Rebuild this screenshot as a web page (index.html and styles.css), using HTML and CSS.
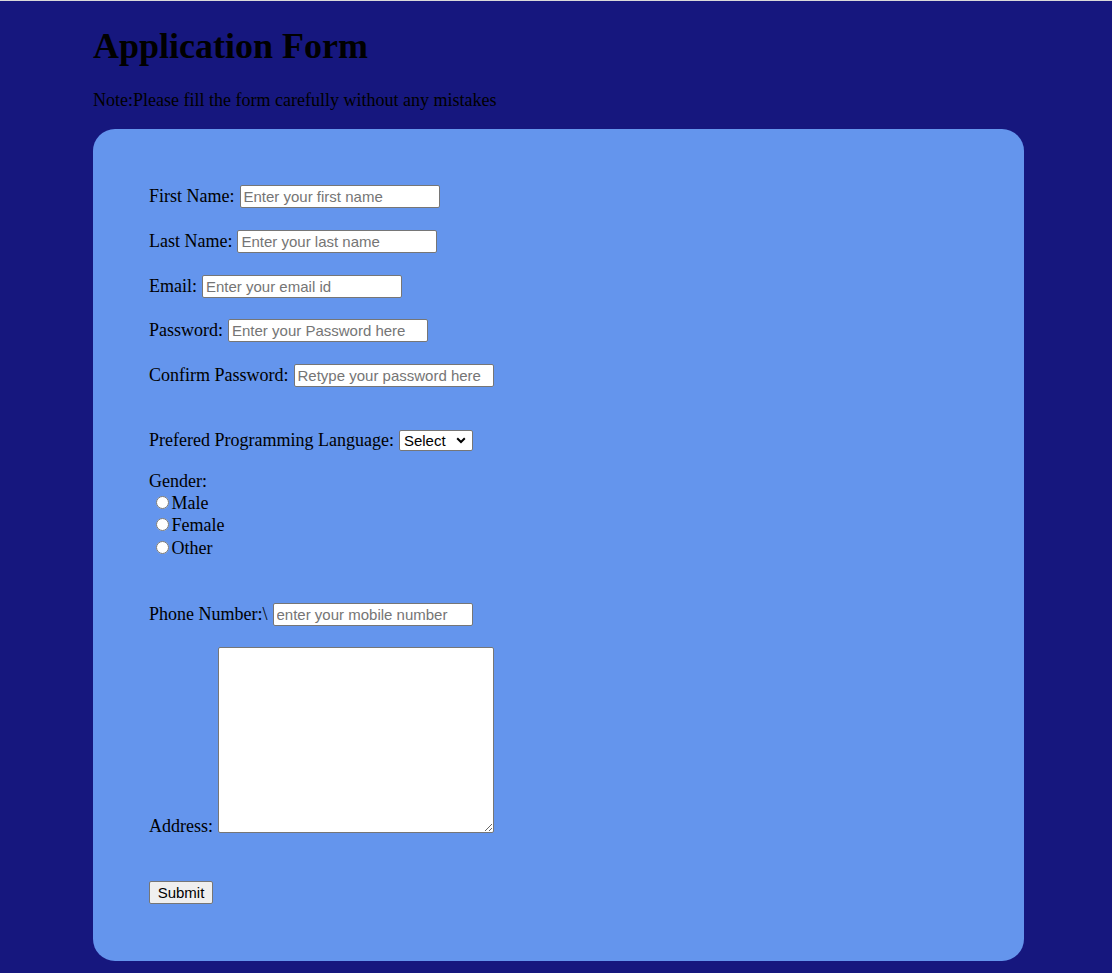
FILE: index.html
```html
<!DOCTYPE html>
<html lang="en">
<head>
<meta charset="utf-8">
<title>Application Form</title>
<link rel="stylesheet" href="styles.css">
</head>
<body>
<div class="wrap">
  <h1 class="title">Application Form</h1>
  <p class="note">Note:Please fill the form carefully without any mistakes</p>
  <form class="panel" onsubmit="return false">
    <div class="row"><label for="fn">First Name:</label><input id="fn" class="field" type="text" placeholder="Enter your first name"></div>
    <div class="row"><label for="ln">Last Name:</label><input id="ln" class="field" type="text" placeholder="Enter your last name"></div>
    <div class="row"><label for="em">Email:</label><input id="em" class="field" type="email" placeholder="Enter your email id"></div>
    <div class="row"><label for="pw">Password:</label><input id="pw" class="field" type="password" placeholder="Enter your Password here"></div>
    <div class="row"><label for="cpw">Confirm Password:</label><input id="cpw" class="field" type="password" placeholder="Retype your password here"></div>

    <div class="row row-select"><label for="lang">Prefered Programming Language:</label>
      <span class="select-wrap">
        <select id="lang" class="select">
          <option>Select</option>
          <option>C</option>
          <option>C++</option>
          <option>Java</option>
          <option>Python</option>
        </select>
        <svg class="chev" width="10" height="7" viewBox="0 0 10 7" aria-hidden="true"><path d="M1.2 1.3 L5 5 L8.8 1.3" fill="none" stroke="#000" stroke-width="2"/></svg>
      </span>
    </div>

    <div class="gender">
      <div class="gline">Gender:</div>
      <label class="gline opt"><input class="radio" type="radio" name="gender">Male</label>
      <label class="gline opt"><input class="radio" type="radio" name="gender">Female</label>
      <label class="gline opt"><input class="radio" type="radio" name="gender">Other</label>
    </div>

    <div class="row row-phone"><label for="ph">Phone Number:\</label><input id="ph" class="field" type="tel" placeholder="enter your mobile number"></div>

    <div class="row row-address"><label class="addr-label" for="ad">Address:</label><textarea id="ad" class="area"></textarea></div>

    <div class="row-submit"><button class="btn" type="submit">Submit</button></div>
  </form>
</div>
</body>
</html>
```

FILE: styles.css
```css
html, body {
  margin: 0;
  padding: 0;
}

body {
  background: #16177e;
  border-top: 1px solid #d9d9d9;
  font-family: "Liberation Serif", "Times New Roman", serif;
  font-size: 18px;
  color: #000;
  min-height: 972px;
  box-sizing: border-box;
}

.wrap {
  width: 931px;
  margin-left: 93px;
  display: flow-root;
}

.title {
  font-size: 36px;
  font-weight: bold;
  margin: 24px 0 0;
  line-height: normal;
}

.note {
  margin: 23px 0 18px;
  line-height: normal;
}

.panel {
  box-sizing: border-box;
  background: #6495ed;
  border-radius: 22px;
  padding: 56px;
  height: 832px;
  display: flex;
  flex-direction: column;
  align-items: flex-start;
}

.row {
  display: flex;
  align-items: baseline;
  gap: 5px;
  margin-bottom: 21.8px;
}

.row label {
  line-height: normal;
}

.field {
  box-sizing: border-box;
  width: 200px;
  height: 23px;
  margin: 0;
  padding: 1px 3px;
  border: 1px solid #767676;
  border-radius: 2px;
  background: #fff;
  font-family: "Liberation Sans", Arial, sans-serif;
  font-size: 15px;
  color: #000;
}

.field::placeholder {
  color: #757575;
}

.row-select {
  margin-top: 21.5px;
  margin-bottom: 0;
}

.select-wrap {
  position: relative;
  display: inline-flex;
}

.select {
  appearance: none;
  -webkit-appearance: none;
  box-sizing: border-box;
  height: 21px;
  width: 74px;
  margin: 0;
  padding: 0 20px 0 4px;
  font-family: "Liberation Sans", Arial, sans-serif;
  font-size: 15px;
  color: #000;
  background: #fff;
  border: 1px solid #767676;
  border-radius: 2px;
}

.chev {
  position: absolute;
  right: 7px;
  top: 7px;
  pointer-events: none;
}

.gender {
  margin-top: 19.2px;
  display: flex;
  flex-direction: column;
}

.gline {
  height: 22.3px;
  line-height: normal;
}

.opt {
  display: flex;
  align-items: baseline;
}

.radio {
  width: 13px;
  height: 13px;
  margin: 3px 3px 0 6.5px;
}

.row-phone {
  margin-top: 43px;
  margin-bottom: 21.3px;
}

.row-address {
  align-items: flex-end;
  margin-bottom: 0;
}

.addr-label {
  margin-bottom: -3.6px;
}

.area {
  box-sizing: border-box;
  width: 276px;
  height: 186px;
  margin: 0;
  padding: 2px;
  border: 1px solid #767676;
  border-radius: 2px;
  background: #fff;
  font-family: "Liberation Mono", monospace;
  font-size: 15px;
}

.row-submit {
  margin-top: 48px;
}

.btn {
  box-sizing: border-box;
  width: 64px;
  height: 23px;
  margin: 0;
  padding: 1px 6px;
  border: 1px solid #767676;
  border-radius: 2px;
  background: #efefef;
  font-family: "Liberation Sans", Arial, sans-serif;
  font-size: 15px;
  color: #000;
}
```
